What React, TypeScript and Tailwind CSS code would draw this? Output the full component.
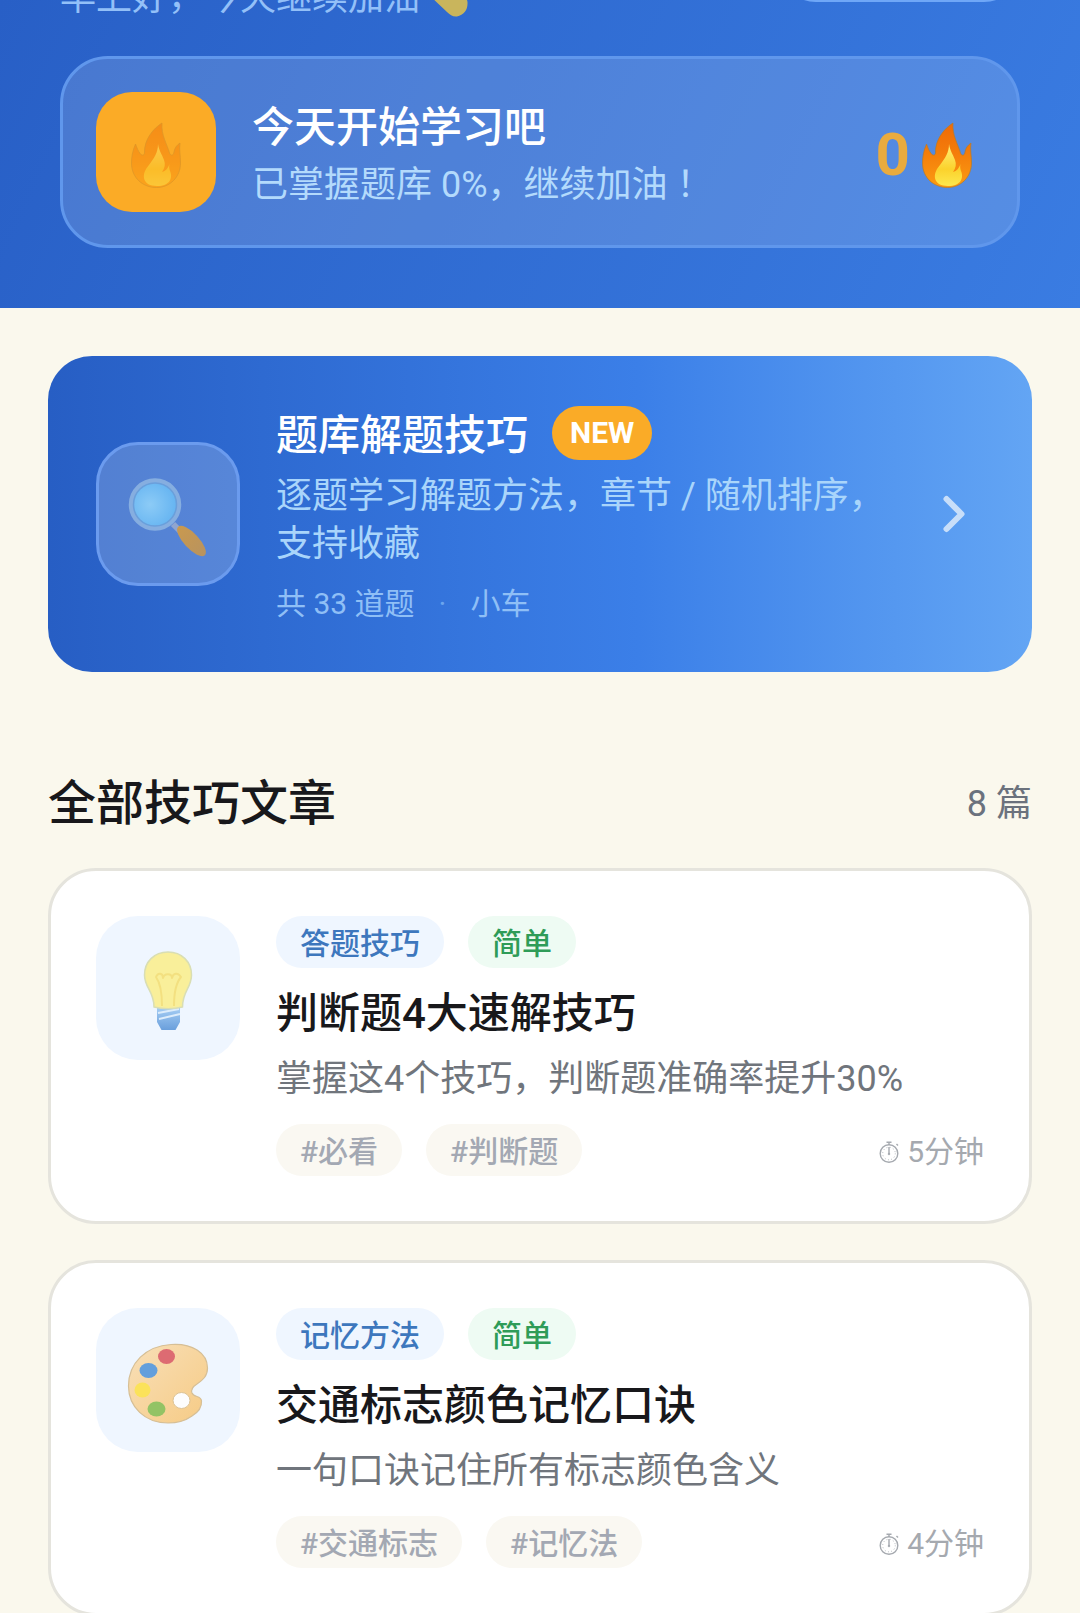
import React from "react";

interface Article {
    id: number;
    icon: React.ReactNode;
    category: string;
    level: string;
    title: string;
    desc: string;
    tags: string[];
    minutes: number;
}

function FlameIcon({ className }: { className?: string }) {
    return (
        <svg viewBox="0 0 50 66" className={className} aria-hidden="true">
            <defs>
                <linearGradient id="flameOuter" x1="0" y1="0" x2="0" y2="1">
                    <stop offset="0" stopColor="#ee6a08" />
                    <stop offset="0.45" stopColor="#f47c0a" />
                    <stop offset="1" stopColor="#fb9c12" />
                </linearGradient>
                <linearGradient id="flameInner" x1="0" y1="0" x2="0" y2="1">
                    <stop offset="0" stopColor="#fff07a" />
                    <stop offset="0.6" stopColor="#fbd22c" />
                    <stop offset="1" stopColor="#fde84e" />
                </linearGradient>
            </defs>
            <path
                d="M31 1C23 6 13 17 13.5 31C13.5 33 11 34 9.5 32C7 29 6 26 4.5 22C1.5 29 0.5 35 0.5 41C0.5 56 12 65.5 25.5 65.5C39 65.5 49.5 55 49.5 41C49.5 33 48 28 49 21C46 23 43.5 26 43 30C42.5 34 39.5 34 38.5 31C36 22 30 13 31 1Z"
                fill="url(#flameOuter)"
                stroke="#b57a2a"
                strokeOpacity="0.7"
            />
            <path
                d="M27 22C27 31 23 36 18 43C9 53 12 64 26 64C39 64 42 56 39 49C38 46 38 44 38.5 42C37 46 35 49 31 50C34 46 34.500 42 33 38C31 32 28 29 27 22Z"
                fill="url(#flameInner)"
            />
        </svg>
    );
}

function MagnifierIcon() {
    return (
        <svg viewBox="0 0 84 84" className="size-[84px] overflow-visible" aria-hidden="true">
            <defs>
                <radialGradient id="lens" cx="0.4" cy="0.5" r="0.6">
                    <stop offset="0" stopColor="#8ccbf6" />
                    <stop offset="1" stopColor="#62b2f1" />
                </radialGradient>
                <linearGradient id="handle" x1="0" y1="0" x2="1" y2="0">
                    <stop offset="0" stopColor="#c9994f" />
                    <stop offset="1" stopColor="#b8935f" />
                </linearGradient>
            </defs>
            <path d="M47 52L54 59" stroke="#90a5cf" strokeWidth="6" />
            <ellipse cx="65.5" cy="69" rx="19.5" ry="7.5" transform="rotate(47 65.5 69)" fill="url(#handle)" />
            <circle cx="29" cy="32.5" r="24" fill="url(#lens)" stroke="#86aee0" strokeWidth="4.5" />
            <circle cx="29" cy="32.5" r="21.5" fill="none" stroke="#6a9fdb" strokeWidth="1.5" />
        </svg>
    );
}

function BulbIcon() {
    return (
        <svg viewBox="0 0 84 84" className="size-[84px] overflow-visible" aria-hidden="true">
            <defs>
                <linearGradient id="bulbBase" x1="0" y1="0" x2="0" y2="1">
                    <stop offset="0" stopColor="#a9d0f5" />
                    <stop offset="1" stopColor="#6a9fdc" />
                </linearGradient>
            </defs>
            <path d="M31 60H54V76L49.5 84H35.5L31 76Z" fill="url(#bulbBase)" />
            <path d="M32 67L53 63M33 73L54 68" stroke="#dcecfb" strokeWidth="2" />
            <path
                d="M42 6C28 6 18.5 16 18.5 29C18.5 42 28 45 28 61C36 63 48 63 56.5 61C56.5 45 65.5 42 65.5 29C65.5 16 56 6 42 6Z"
                fill="#f9ef9a"
                stroke="#d9deb4"
                strokeWidth="1.5"
            />
            <path
                d="M36 60C36 48 35 38 30 31C32 26 37 27 37 32C38 27 46 27 46 32C47 27 52 26 55 31C49 38 48 48 48 60"
                fill="none"
                stroke="#f3e080"
                strokeWidth="2"
                strokeLinejoin="round"
            />
        </svg>
    );
}

function PaletteIcon() {
    return (
        <svg viewBox="0 0 84 84" className="size-[84px] overflow-visible" aria-hidden="true">
            <defs>
                <linearGradient id="wood" x1="0" y1="0" x2="1" y2="1">
                    <stop offset="0" stopColor="#f8dfb8" />
                    <stop offset="1" stopColor="#f6cb85" />
                </linearGradient>
            </defs>
            <path
                d="M45 6.5C66 5 81.5 15 81.5 30C81.5 38 77 42 71 46C66 49 65 52 66 55C68 60 75 57 75.5 63C76 70 71 75 66 78C59 83 51 85 42 85C19 85 2.5 69 2.5 48C2.5 25 20 8 45 6.5Z"
                fill="url(#wood)"
                stroke="#d6bf96"
                strokeWidth="1.2"
            />
            <ellipse cx="55.5" cy="62.5" rx="8.5" ry="8" fill="#fdfdfd" stroke="#dcc294" />
            <ellipse cx="40.5" cy="18.5" rx="8.5" ry="7.5" fill="#dd6b72" />
            <ellipse cx="22.5" cy="32.5" rx="9" ry="7.5" fill="#639fdc" />
            <ellipse cx="16.5" cy="52" rx="8" ry="7.5" fill="#fbe25a" />
            <ellipse cx="30.5" cy="71" rx="9" ry="7.5" fill="#93c365" />
        </svg>
    );
}

function ArmIcon() {
    return (
        <svg viewBox="0 0 42 42" className="size-[42px]" aria-hidden="true">
            <path
                d="M14 2C20 -1 26 3 25 9L18 14L18 20C28 12 38 16 39.5 25C40 33 36 38 29 39.5C25 40 22 38 19 35L1 18C1 12 6 6 14 2Z"
                fill="#c9b55c"
            />
        </svg>
    );
}

function StopwatchIcon() {
    return (
        <svg viewBox="0 0 20 22" className="h-[22px] w-5" fill="none" stroke="currentColor" aria-hidden="true">
            <circle cx="10" cy="12.5" r="8.8" strokeWidth="1.4" />
            <circle cx="10" cy="12.5" r="6.3" strokeWidth="1" strokeDasharray="0.8 2.5" />
            <path d="M7.5 1.2H12.5M10 1.2V4M10 6V13M17.5 3L19 4.5" strokeWidth="1.4" />
            <circle cx="10" cy="13" r="0.8" fill="currentColor" />
        </svg>
    );
}

const ARTICLES: Article[] = [
    {
        id: 1,
        icon: <BulbIcon />,
        category: "答题技巧",
        level: "简单",
        title: "判断题4大速解技巧",
        desc: "掌握这4个技巧，判断题准确率提升30%",
        tags: ["必看", "判断题"],
        minutes: 5,
    },
    {
        id: 2,
        icon: <PaletteIcon />,
        category: "记忆方法",
        level: "简单",
        title: "交通标志颜色记忆口诀",
        desc: "一句口诀记住所有标志颜色含义",
        tags: ["交通标志", "记忆法"],
        minutes: 4,
    },
];

function Header() {
    return (
        <header className="overflow-hidden bg-linear-[115deg] from-[#285fc6] to-[#3a7ce2] px-[60px] pb-[60px]">
            {/* greeting row is scrolled mostly out of view */}
            <div className="-mt-20 mb-9 flex h-[100px] items-end justify-between">
                <p className="flex items-center gap-2 text-[36px] leading-[44px] text-[#93c0f8]">
                    早上好，今天继续加油
                    <ArmIcon />
                </p>
                <button aria-label="切换车型" className="mb-[18px] h-[72px] w-60 rounded-full border-3 border-[#6fa7f7] bg-[#4d86df]" />
            </div>

            <div className="flex items-center gap-9 rounded-[48px] border-3 border-[#6097ec] bg-white/15 p-[33px]">
                <div className="flex size-[120px] items-center justify-center rounded-[36px] bg-[#fbab26] pt-1.5">
                    <FlameIcon className="h-[66px] w-[50px] opacity-45" />
                </div>
                <div className="flex-1 pt-1.5">
                    <h2 className="text-[42px] leading-[60px] font-medium text-white">今天开始学习吧</h2>
                    <p className="text-[36px] leading-[54px] text-[#b3dafc]">
                        已掌握题库 0%，继续加油<span className="font-['Roboto','Noto_Sans_CJK_TC',sans-serif]">！</span>
                    </p>
                </div>
                <div className="flex items-center gap-3 pt-1.5 pr-3">
                    <span className="text-[60px] leading-[72px] font-bold text-[#e9ab3f]">0</span>
                    <FlameIcon className="h-[66px] w-[50px]" />
                </div>
            </div>
        </header>
    );
}

function PracticeCard() {
    return (
        <a
            href="#practice"
            className="flex items-center gap-9 rounded-[44px] bg-linear-to-r from-[#275ec4] via-[#3b7fe8] via-60% to-[#63a5f4] p-12"
        >
            <div className="flex size-36 shrink-0 items-center justify-center rounded-[42px] border-3 border-[#6b9bee] bg-white/20">
                <MagnifierIcon />
            </div>
            <div className="flex-1">
                <div className="flex items-start gap-6">
                    <h2 className="text-[42px] leading-[64px] font-medium text-white">题库解题技巧</h2>
                    <span className="mt-0.5 rounded-full bg-[#faab27] px-[18px] text-[30px] leading-[54px] font-bold text-white">NEW</span>
                </div>
                <p className="mt-1 text-[36px] leading-[48px] text-[#a9d5fb]">逐题学习解题方法，章节 / 随机排序，支持收藏</p>
                <p className="mt-4 flex gap-6 text-[30px] leading-[40px] text-[#8fbff6]">
                    <span>共 33 道题</span>
                    <span className="text-[#6ba5ee]">·</span>
                    <span>小车</span>
                </p>
            </div>
            <svg viewBox="0 0 24 24" className="size-[60px] shrink-0" fill="none" stroke="#c8def9" strokeWidth="2.4" strokeLinecap="round" strokeLinejoin="round" aria-hidden="true">
                <path d="M9 6l6 6-6 6" />
            </svg>
        </a>
    );
}

function ArticleCard({ article }: { article: Article }) {
    return (
        <a href={`#article-${article.id}`} className="flex items-start gap-9 rounded-[48px] border-3 border-[#e5e4dd] bg-white p-[45px]">
            <div className="flex size-36 shrink-0 items-center justify-center rounded-[42px] bg-[#eff6ff]">{article.icon}</div>
            <div className="flex-1">
                <div className="flex gap-6 text-[30px] leading-[48px] font-medium">
                    <span className="rounded-full bg-[#eff6ff] px-6 pt-1 text-[#3d77bd]">{article.category}</span>
                    <span className="rounded-full bg-[#eefbf3] px-6 pt-1 text-[#2f9c58]">{article.level}</span>
                </div>
                <h3 className="mt-4 text-[42px] leading-[60px] font-medium text-[#18181b]">{article.title}</h3>
                <p className="mt-2 text-[36px] leading-[54px] text-[#70757c]">{article.desc}</p>
                <div className="mt-[18px] flex items-center gap-6 text-[30px] leading-[48px]">
                    {article.tags.map((tag) => (
                        <span key={tag} className="rounded-full bg-[#faf8f2] px-6 pt-1 font-medium text-[#a3a8b3]">
                            #{tag}
                        </span>
                    ))}
                    <span className="ml-auto flex items-center gap-2 pt-1 text-[#a5a9af]">
                        <StopwatchIcon />
                        {article.minutes}分钟
                    </span>
                </div>
            </div>
        </a>
    );
}

export default function App() {
    return (
        <div className="min-h-screen bg-[#faf8ed] font-['Roboto','Noto_Sans_CJK_SC',sans-serif]">
            <Header />
            <main className="px-12 pt-12">
                <PracticeCard />

                <div className="mt-24 mb-7 flex items-center justify-between">
                    <h1 className="text-[48px] leading-[72px] font-medium text-[#18181b]">全部技巧文章</h1>
                    <span className="text-[36px] leading-[54px] text-[#6b727d]">8 篇</span>
                </div>

                <div className="flex flex-col gap-9">
                    {ARTICLES.map((article) => (
                        <ArticleCard key={article.id} article={article} />
                    ))}
                </div>
            </main>
        </div>
    );
}
